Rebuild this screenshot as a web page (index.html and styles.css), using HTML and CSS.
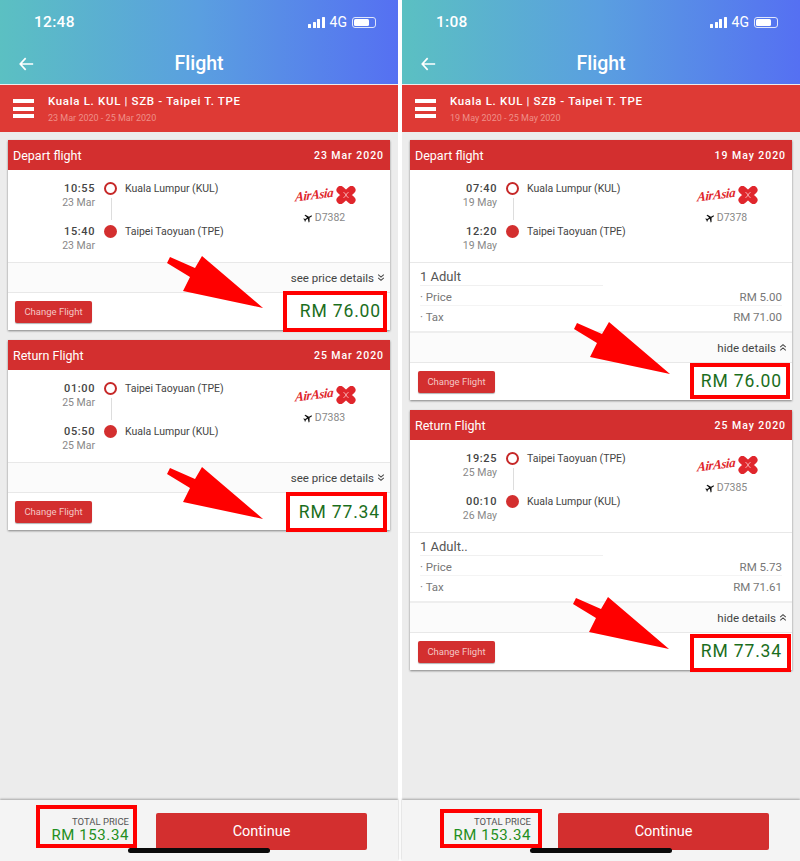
FILE: index.html
```html
<!DOCTYPE html>
<html lang="en">
<head>
<meta charset="utf-8">
<title>Flight</title>
<link rel="stylesheet" href="styles.css">
</head>
<body>
<svg class="defs" width="0" height="0" aria-hidden="true">
  <symbol id="plane" viewBox="0 0 24 24"><path d="M22 16v-2.500l-8.500-5V3.500C13.500 2.500 12.800 1 12 1s-1.500 1.500-1.500 2.500v5L2 13.500V16l8.500-2.500V19L8 20.800V23l4-1 4 1v-2.200L13.500 19v-5.500z" transform="rotate(60 12 12)"/></symbol>
  <symbol id="flower" viewBox="0 0 20 18"><path d="M4.500 4 15.500 14M15.500 4 4.500 14" fill="none" stroke="#e0262c" stroke-width="8" stroke-linecap="round"/><path d="M7.500 6.500c1.500.8 2.500 1.500 2.500 2.500s-1 1.700-2.500 2.500M12.500 6.500c-1.500.8-2.500 1.500-2.500 2.500s1 1.700 2.500 2.500" fill="none" stroke="#f9c9cb" stroke-width=".9"/></symbol>
  <symbol id="chev-down" viewBox="0 0 10 10"><path d="M1.500 1.500 5 4.500l3.500-3M1.500 5.500 5 8.500l3.500-3" fill="none" stroke="#444" stroke-width="1.300"/></symbol>
  <symbol id="chev-up" viewBox="0 0 10 10"><path d="M1.500 4.500 5 1.500l3.500 3M1.500 8.500 5 5.500l3.500 3" fill="none" stroke="#444" stroke-width="1.300"/></symbol>
  <symbol id="arrow" viewBox="0 0 96 52"><path d="M3 1 28 12 35 0 96 52 16 35 23 21 0 7z" fill="#f00"/></symbol>
</svg>

<main class="screens">

<section class="phone">
  <header class="top">
    <div class="status">
      <span class="clock">12:48</span>
      <div class="status-right">
        <span class="signal"><i></i><i></i><i></i><i></i></span>
        <span class="net">4G</span>
        <span class="battery"><b></b></span>
      </div>
    </div>
    <div class="titlebar">
      <svg class="back" viewBox="0 0 18 16"><path d="M8 1 1.500 8 8 15M2 8h15" fill="none" stroke="#fff" stroke-width="2"/></svg>
      <h1>Flight</h1>
    </div>
  </header>
  <div class="route">
    <div class="burger"><i></i><i></i><i></i></div>
    <div>
      <div class="route-name">Kuala L. KUL | SZB - Taipei T. TPE</div>
      <div class="route-date">23 Mar 2020 - 25 Mar 2020</div>
    </div>
  </div>
  <div class="content">
    <article class="card">
      <div class="card-head"><span>Depart flight</span><strong>23 Mar 2020</strong></div>
      <div class="card-body">
        <div class="legs">
          <div class="leg"><div class="when"><b>10:55</b><small>23 Mar</small></div><span class="dot open"></span><span class="place">Kuala Lumpur (KUL)</span></div>
          <div class="leg"><div class="when"><b>15:40</b><small>23 Mar</small></div><span class="dot"></span><span class="place">Taipei Taoyuan (TPE)</span></div>
        </div>
        <div class="carrier">
          <div class="logo"><span>AirAsia</span><svg><use href="#flower"/></svg></div>
          <div class="code"><svg><use href="#plane"/></svg>D7382</div>
        </div>
      </div>
      <div class="toggle">see price details <svg><use href="#chev-down"/></svg></div>
      <div class="card-foot">
        <button class="change">Change Flight</button>
        <div class="price price-a">RM 76.00</div>
        <svg class="pointer pointer-a"><use href="#arrow"/></svg>
      </div>
    </article>
    <article class="card">
      <div class="card-head"><span>Return Flight</span><strong>25 Mar 2020</strong></div>
      <div class="card-body">
        <div class="legs">
          <div class="leg"><div class="when"><b>01:00</b><small>25 Mar</small></div><span class="dot open"></span><span class="place">Taipei Taoyuan (TPE)</span></div>
          <div class="leg"><div class="when"><b>05:50</b><small>25 Mar</small></div><span class="dot"></span><span class="place">Kuala Lumpur (KUL)</span></div>
        </div>
        <div class="carrier">
          <div class="logo"><span>AirAsia</span><svg><use href="#flower"/></svg></div>
          <div class="code"><svg><use href="#plane"/></svg>D7383</div>
        </div>
      </div>
      <div class="toggle">see price details <svg><use href="#chev-down"/></svg></div>
      <div class="card-foot">
        <button class="change">Change Flight</button>
        <div class="price price-b">RM 77.34</div>
        <svg class="pointer pointer-b"><use href="#arrow"/></svg>
      </div>
    </article>
  </div>
  <footer class="bottom">
    <div class="total"><small>TOTAL PRICE</small><b>RM 153.34</b></div>
    <button class="continue">Continue</button>
    <span class="home"></span>
  </footer>
</section>

<section class="phone phone-open">
  <header class="top">
    <div class="status">
      <span class="clock">1:08</span>
      <div class="status-right">
        <span class="signal"><i></i><i></i><i></i><i></i></span>
        <span class="net">4G</span>
        <span class="battery"><b></b></span>
      </div>
    </div>
    <div class="titlebar">
      <svg class="back" viewBox="0 0 18 16"><path d="M8 1 1.500 8 8 15M2 8h15" fill="none" stroke="#fff" stroke-width="2"/></svg>
      <h1>Flight</h1>
    </div>
  </header>
  <div class="route">
    <div class="burger"><i></i><i></i><i></i></div>
    <div>
      <div class="route-name">Kuala L. KUL | SZB - Taipei T. TPE</div>
      <div class="route-date">19 May 2020 - 25 May 2020</div>
    </div>
  </div>
  <div class="content">
    <article class="card">
      <div class="card-head"><span>Depart flight</span><strong>19 May 2020</strong></div>
      <div class="card-body">
        <div class="legs">
          <div class="leg"><div class="when"><b>07:40</b><small>19 May</small></div><span class="dot open"></span><span class="place">Kuala Lumpur (KUL)</span></div>
          <div class="leg"><div class="when"><b>12:20</b><small>19 May</small></div><span class="dot"></span><span class="place">Taipei Taoyuan (TPE)</span></div>
        </div>
        <div class="carrier">
          <div class="logo"><span>AirAsia</span><svg><use href="#flower"/></svg></div>
          <div class="code"><svg><use href="#plane"/></svg>D7378</div>
        </div>
      </div>
      <div class="fare">
        <div class="fare-title">1 Adult</div>
        <div class="fare-row"><span>· Price</span><span>RM 5.00</span></div>
        <div class="fare-row"><span>· Tax</span><span>RM 71.00</span></div>
      </div>
      <div class="toggle">hide details <svg><use href="#chev-up"/></svg></div>
      <div class="card-foot">
        <button class="change">Change Flight</button>
        <div class="price price-c">RM 76.00</div>
        <svg class="pointer pointer-c"><use href="#arrow"/></svg>
      </div>
    </article>
    <article class="card">
      <div class="card-head"><span>Return Flight</span><strong>25 May 2020</strong></div>
      <div class="card-body">
        <div class="legs">
          <div class="leg"><div class="when"><b>19:25</b><small>25 May</small></div><span class="dot open"></span><span class="place">Taipei Taoyuan (TPE)</span></div>
          <div class="leg"><div class="when"><b>00:10</b><small>26 May</small></div><span class="dot"></span><span class="place">Kuala Lumpur (KUL)</span></div>
        </div>
        <div class="carrier">
          <div class="logo"><span>AirAsia</span><svg><use href="#flower"/></svg></div>
          <div class="code"><svg><use href="#plane"/></svg>D7385</div>
        </div>
      </div>
      <div class="fare">
        <div class="fare-title">1 Adult..</div>
        <div class="fare-row"><span>· Price</span><span>RM 5.73</span></div>
        <div class="fare-row"><span>· Tax</span><span>RM 71.61</span></div>
      </div>
      <div class="toggle">hide details <svg><use href="#chev-up"/></svg></div>
      <div class="card-foot">
        <button class="change">Change Flight</button>
        <div class="price price-d">RM 77.34</div>
        <svg class="pointer pointer-d"><use href="#arrow"/></svg>
      </div>
    </article>
  </div>
  <footer class="bottom">
    <div class="total"><small>TOTAL PRICE</small><b>RM 153.34</b></div>
    <button class="continue">Continue</button>
    <span class="home"></span>
  </footer>
</section>

</main>
</body>
</html>
```
FILE: styles.css
```css
* { box-sizing: border-box; }
html, body { margin: 0; height: 861px; overflow: hidden; background: #fff; }
body { font-family: Roboto, "Liberation Sans", sans-serif; color: #444; }
.defs { position: absolute; }
.screens { display: flex; justify-content: space-between; width: 800px; height: 861px; }
.phone { width: 398px; height: 861px; display: flex; flex-direction: column; background: #ececec; }

.top { height: 84px; background: linear-gradient(90deg, #5bc0c2 0%, #5a9fe0 50%, #5570f2 100%); color: #fff; }
.status { height: 44px; padding: 12px 22px 0 34px; display: flex; justify-content: space-between; align-items: flex-start; }
.clock { font-size: 15.500px; font-weight: 500; line-height: 20px; letter-spacing: .3px; }
.status-right { display: flex; align-items: center; gap: 5px; height: 20px; }
.signal { display: flex; align-items: flex-end; gap: 1.500px; height: 11px; }
.signal i { width: 3px; background: #fff; border-radius: .5px; }
.signal i:nth-child(1) { height: 4px; }
.signal i:nth-child(2) { height: 6px; }
.signal i:nth-child(3) { height: 8.500px; }
.signal i:nth-child(4) { height: 11px; }
.net { font-size: 14px; line-height: 20px; }
.battery { width: 24px; height: 11px; border: 1px solid #dfe6fb; border-radius: 3px; padding: 1px; }
.battery b { display: block; width: 15px; height: 7px; background: #fff; border-radius: 1.500px; }

.titlebar { height: 40px; position: relative; display: flex; align-items: center; justify-content: center; }
.titlebar h1 { margin: 0 0 1px; font-size: 19.500px; font-weight: 500; line-height: 30px; }
.back { position: absolute; left: 19px; top: 13px; width: 15px; height: 14px; }

.route { height: 47px; margin-top: 1px; background: #de3a35; display: flex; align-items: center; padding: 0 0 0 13px; gap: 14px; }
.burger { display: flex; flex-direction: column; gap: 3.500px; width: 21px; }
.burger i { height: 4px; background: #fff; }
.route-name { color: #fff; font-size: 11.500px; font-weight: 500; line-height: 15px; letter-spacing: .67px; }
.route-date { color: #ef8f88; font-size: 9px; line-height: 12px; margin-top: 3px; }

.content { flex: 1; padding: 8px 8px 0; display: flex; flex-direction: column; gap: 10px; }
.card { background: #fff; box-shadow: 0 1px 2px rgba(0,0,0,.45); }
.card-head { height: 30px; background: #d32f2f; color: #fff; display: flex; justify-content: space-between; align-items: center; padding: 0 6px 0 5px; font-size: 12.500px; }
.card-head strong { font-size: 10.500px; font-weight: 500; letter-spacing: .95px; }
.card-body { height: 93px; display: flex; padding-top: 11px; border-bottom: 1px solid #e8e8e8; }
.legs { width: 285px; position: relative; }
.legs::before { content: ""; position: absolute; left: 102.500px; top: 17px; height: 22px; width: 1px; background: #ddd; }
.leg { height: 43px; display: flex; align-items: flex-start; }
.when { width: 87px; text-align: right; display: flex; flex-direction: column; }
.when b { font-size: 11px; font-weight: 500; line-height: 15px; letter-spacing: .6px; color: #444; }
.when small { font-size: 10.500px; line-height: 13px; color: #888; }
.dot { width: 13px; height: 13px; border-radius: 50%; background: #d32f2f; margin: 1px 8px 0 9px; flex: none; }
.dot.open { background: #fff; border: 2px solid #c62828; }
.place { font-size: 10.500px; line-height: 15px; color: #444; }
.carrier { flex: 1; display: flex; flex-direction: column; align-items: center; padding-right: 32px; }
.logo { display: flex; align-items: center; height: 20px; gap: 2px; margin-top: 4px; }
.logo span { font-family: "Liberation Serif", serif; font-style: italic; font-weight: 700; font-size: 13px; letter-spacing: -.4px; color: #e0262c; transform: rotate(-7deg) skewX(-10deg); }
.logo svg { width: 20px; height: 18px; }
.code { font-size: 10.500px; color: #888; display: flex; align-items: center; gap: 2px; margin: 6px 3px 0 0; }
.code svg { width: 10px; height: 10px; fill: #111; }

.fare { height: 70px; padding: 0 10px 0 10px; border-bottom: 2px solid #eee; }
.fare-title { width: 183px; height: 23px; font-size: 13px; line-height: 27px; color: #555; border-bottom: 1px solid #f0f0f0; }
.fare-row { height: 20px; display: flex; justify-content: space-between; font-size: 11.500px; line-height: 22px; color: #777; border-bottom: 1px solid #f4f4f4; }
.fare-row:last-child { border-bottom: 0; }

.toggle { height: 30px; background: #fbfbfb; border-bottom: 1px solid #e8e8e8; display: flex; align-items: center; justify-content: flex-end; gap: 3px; padding-right: 5px; font-size: 11.500px; color: #444; }
.toggle svg { width: 8px; height: 9px; }

.card-foot { height: 37px; position: relative; display: flex; align-items: center; padding-left: 7px; }
.phone-open .card-foot { padding-left: 8px; }
.change { width: 77px; height: 22px; border: 0; border-radius: 2px; background: #d32f2f; color: #f4c6c4; font: 9.500px Roboto, sans-serif; box-shadow: 0 1px 1px rgba(0,0,0,.3); padding: 0; }

.price { position: absolute; border: 4px solid #f00; background: #fff; color: #1b6e1d; font-size: 17.500px; letter-spacing: .85px; text-align: right; }
.price-a { top: -2px; right: 3px; width: 104px; height: 41px; line-height: 32px; padding-right: 2px; }
.price-b { top: -1px; right: 3px; width: 101px; height: 40px; line-height: 32px; padding-right: 3px; }
.price-c { top: 0; right: 2px; width: 100px; height: 36px; line-height: 28px; padding-right: 4px; }
.price-d { top: 1px; right: 1px; width: 101px; height: 38px; line-height: 26px; padding-right: 5px; }

.pointer { position: absolute; width: 96px; height: 52px; }
.pointer-a { left: 159px; top: -37px; }
.pointer-b { left: 159px; top: -26px; }
.pointer-c { left: 164px; top: -41px; }
.pointer-d { left: 163px; top: -36px; }

.bottom { height: 61px; background: #f4f4f4; position: relative; box-shadow: 0 -1px 2px rgba(0,0,0,.3); display: flex; align-items: flex-start; padding: 5px 0 0 36px; }
.total { width: 101px; height: 43px; margin-right: 19px; border: 4px solid #f00; display: flex; flex-direction: column; align-items: flex-end; padding: 7px 4px 0 0; }
.total small { font-size: 9.500px; line-height: 11px; color: #555; }
.total b { font-size: 15px; font-weight: 400; line-height: 16px; color: #1f8f21; letter-spacing: .6px; }
.phone-open .bottom { padding: 9px 0 0 38px; }
.phone-open .total { width: 102px; height: 39px; margin-right: 16px; padding: 3px 7px 0 0; }
.continue { width: 211px; height: 37px; margin-top: 8px; border: 0; border-radius: 2px; background: #d32f2f; color: #fff; font: 14.500px Roboto, sans-serif; padding: 0; }
.phone-open .continue { margin-top: 4px; }
.home { position: absolute; left: 128px; bottom: 8px; width: 142px; height: 5px; border-radius: 3px; background: #0a0a0a; }
```
